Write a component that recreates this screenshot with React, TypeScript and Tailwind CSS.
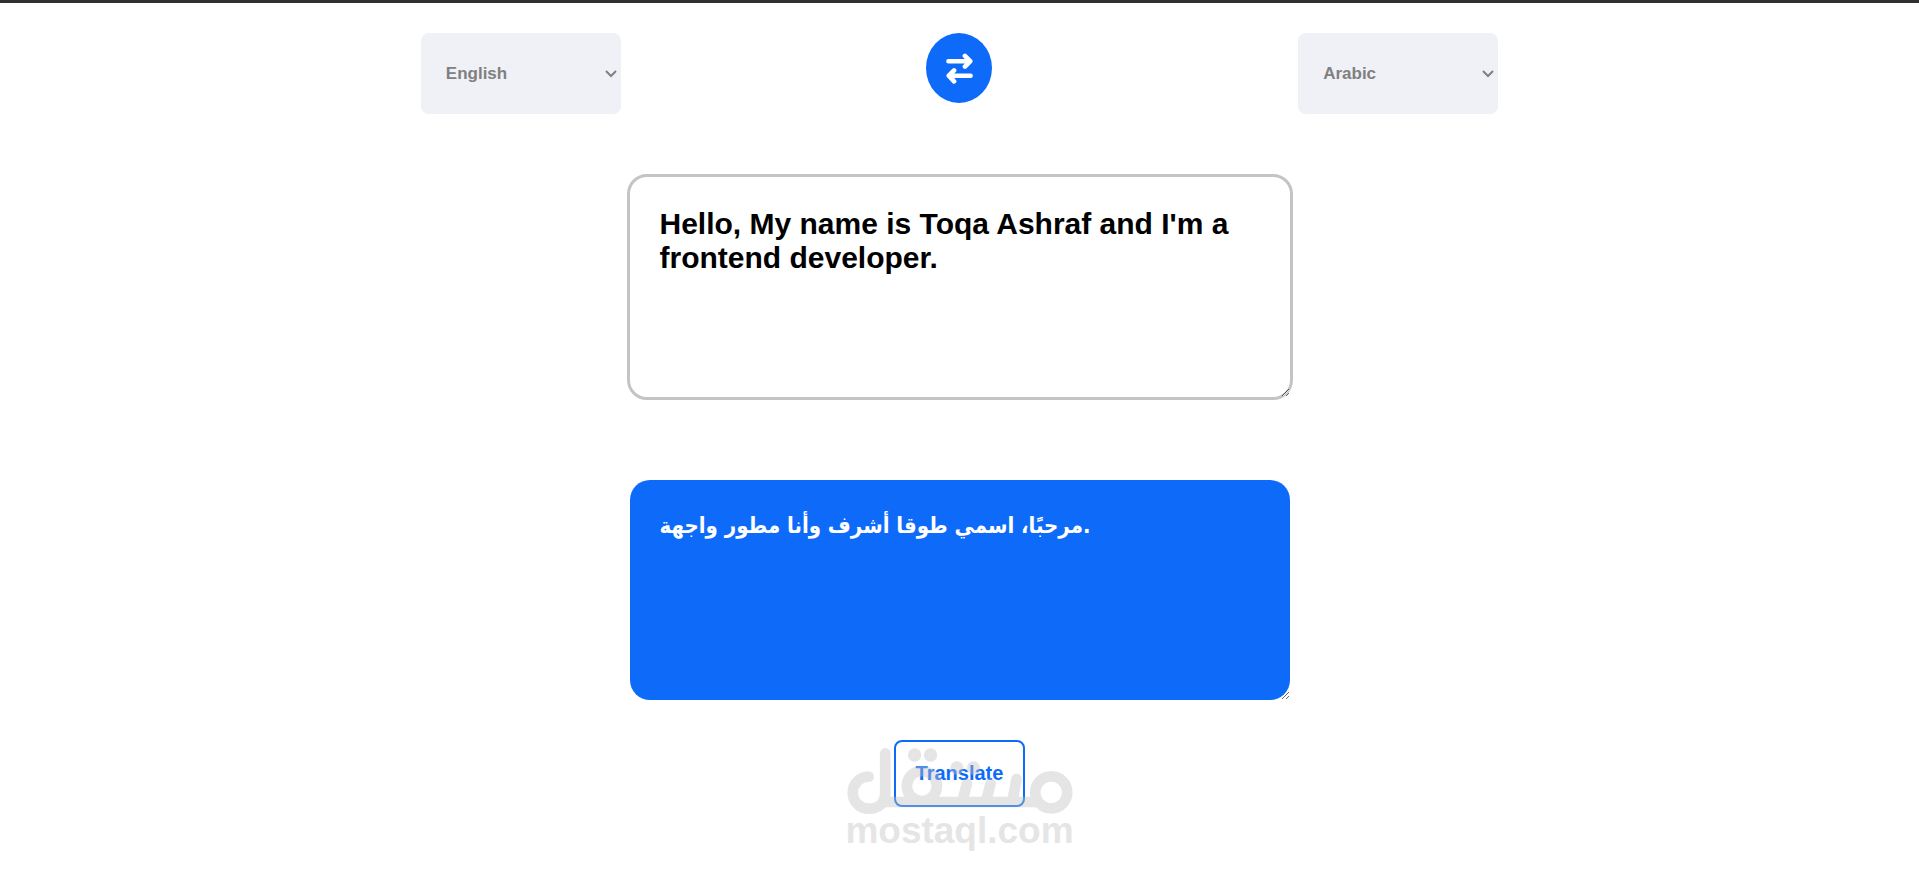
import { useState } from 'react';

const languages = ['English', 'Arabic', 'French', 'German', 'Spanish'];

interface LanguageSelectProps {
  label: string;
  value: string;
  onChange: (value: string) => void;
}

function LanguageSelect({ label, value, onChange }: LanguageSelectProps) {
  return (
    <div className="relative">
      <select
        aria-label={label}
        value={value}
        onChange={(e) => onChange(e.target.value)}
        className="appearance-none block w-[200px] h-[81px] pl-[25px] rounded-lg bg-[#f0f1f7] text-[17px] font-bold text-[#808080]"
      >
        {languages.map((language) => (
          <option key={language}>{language}</option>
        ))}
      </select>
      <svg
        className="absolute right-1 top-[37px] w-3 h-2 text-[#808080] pointer-events-none"
        viewBox="0 0 12 8"
        fill="none"
        stroke="currentColor"
        strokeWidth="2"
      >
        <path d="M1 1l5 5 5-5" />
      </svg>
    </div>
  );
}

function SwapIcon() {
  return (
    <svg
      className="w-[27px] h-[31px]"
      viewBox="0 0 81 94"
      fill="none"
      stroke="currentColor"
      strokeWidth="14"
      strokeLinecap="round"
      strokeLinejoin="round"
    >
      <path d="M7 25h66M57 9l16 16-16 16" />
      <path d="M74 69H8M24 53L8 69l16 17" />
    </svg>
  );
}

function Watermark() {
  return (
    <div className="absolute top-2 left-1/2 -translate-x-1/2 flex flex-col items-center text-[#c0c0c0] opacity-40 pointer-events-none">
      <svg
        className="w-[226px] h-[67px]"
        viewBox="12 13 678 201"
        fill="none"
        stroke="currentColor"
        strokeWidth="32"
        strokeLinecap="round"
      >
        <circle cx="625" cy="146" r="48" />
        <path d="M77 99a48 48 0 1 0 1 96c30 0 49-18 49-48V29" />
        <path d="M127 175H580" />
        <circle cx="237" cy="127" r="45" />
        <path d="M358 175l14-55M429 175l14-55M508 175l13-69" />
        <g fill="currentColor" stroke="none">
          <circle cx="215" cy="34" r="20" />
          <circle cx="263" cy="34" r="20" />
          <circle cx="342" cy="73" r="20" />
          <circle cx="392" cy="73" r="20" />
        </g>
      </svg>
      <span className="text-[37px] leading-8 font-bold">mostaql.com</span>
    </div>
  );
}

function App() {
  const [from, setFrom] = useState('English');
  const [to, setTo] = useState('Arabic');
  const [text, setText] = useState("Hello, My name is Toqa Ashraf and I'm a frontend developer.");
  const [result, setResult] = useState('مرحبًا، اسمي طوقا أشرف وأنا مطور واجهة.');

  const swap = () => {
    setFrom(to);
    setTo(from);
    setText(result);
    setResult(text);
  };

  return (
    <div className="min-h-screen border-t-3 border-[#2f2f2f] bg-white font-['Liberation_Sans','DejaVu_Sans',sans-serif]">
      {/* Language bar */}
      <header className="w-[88%] mx-auto pt-[30px] flex items-start justify-evenly">
        <LanguageSelect label="Translate from" value={from} onChange={setFrom} />
        <button
          type="button"
          aria-label="Swap languages"
          onClick={swap}
          className="w-[66px] h-[70px] flex items-center justify-center rounded-[50%] bg-[#0e6bf9] text-white"
        >
          <SwapIcon />
        </button>
        <LanguageSelect label="Translate to" value={to} onChange={setTo} />
      </header>

      {/* Text boxes */}
      <main className="flex flex-col items-center pt-[60px]">
        <textarea
          aria-label="Source text"
          value={text}
          onChange={(e) => setText(e.target.value)}
          spellCheck={false}
          className="w-[666px] h-[226px] p-[30px] rounded-[20px] border-3 border-[#c4c4c4] text-[30px] leading-[34px] font-bold text-black outline-none"
        />
        <textarea
          aria-label="Translation"
          value={result}
          readOnly
          className="w-[660px] h-[220px] mt-20 p-[30px] rounded-[20px] bg-[#0e6bf9] font-['DejaVu_Sans_Condensed','DejaVu_Sans',sans-serif] text-[22px] leading-[32px] font-bold text-white outline-none"
        />
        <div className="relative mt-10">
          <button
            type="button"
            className="p-5 rounded-lg border-2 border-[#0e6bf9] bg-white text-[20px] leading-[23px] font-bold text-[#0e6bf9]"
          >
            Translate
          </button>
          <Watermark />
        </div>
      </main>
    </div>
  );
}

export default App;
